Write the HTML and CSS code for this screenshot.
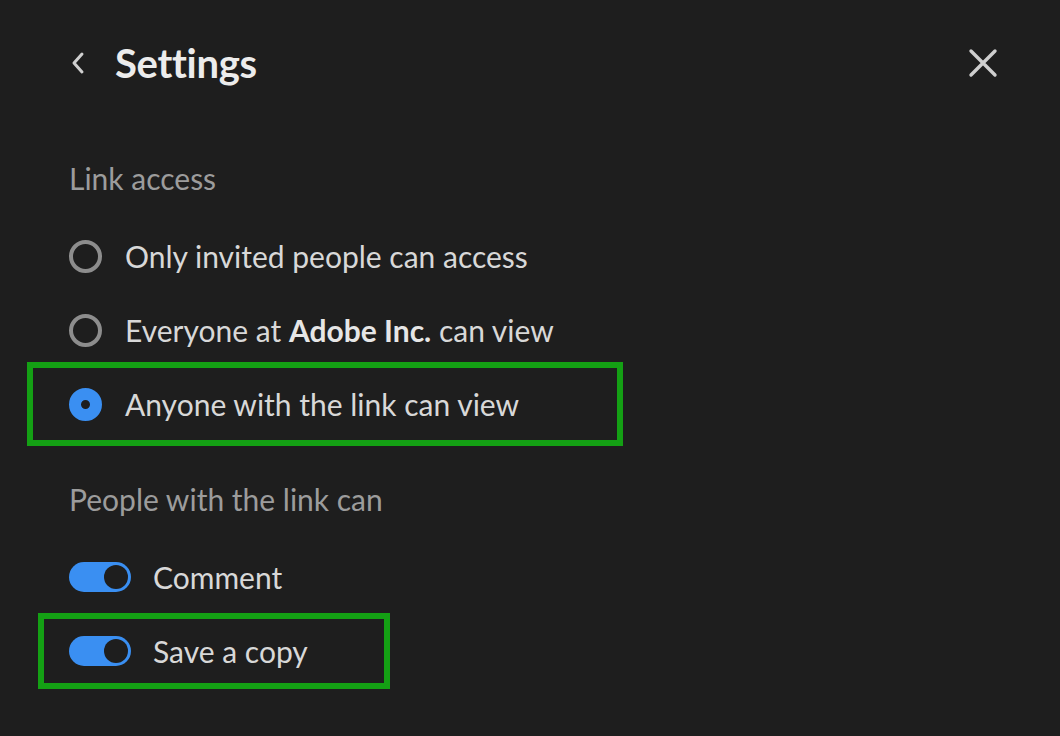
FILE: index.html
```html
<!DOCTYPE html>
<html>
<head>
<meta charset="utf-8">
<link rel="stylesheet" href="styles.css">
</head>
<body>
<div class="panel">
  <header class="header">
    <div class="title-wrap">
      <svg class="back" width="18" height="26" viewBox="0 0 18 26"><path d="M13 4 L5 13 L13 22" fill="none" stroke="#cfcfcf" stroke-width="3" stroke-linecap="round" stroke-linejoin="round"/></svg>
      <h1 class="title">Settings</h1>
    </div>
    <svg class="close" width="30" height="30" viewBox="0 0 30 30"><path d="M3 3 L27 27 M27 3 L3 27" fill="none" stroke="#cfcfcf" stroke-width="3.4" stroke-linecap="round"/></svg>
  </header>

  <section class="section">
    <div class="label">Link access</div>
    <div class="row">
      <span class="radio"></span>
      <span class="text">Only invited people can access</span>
    </div>
    <div class="row">
      <span class="radio"></span>
      <span class="text">Everyone at <b>Adobe Inc.</b> can view</span>
    </div>
    <div class="row row-hl hl-1">
      <span class="radio radio-on"></span>
      <span class="text">Anyone with the link can view</span>
    </div>
  </section>

  <section class="section section-2">
    <div class="label">People with the link can</div>
    <div class="row">
      <span class="toggle"><span class="knob"></span></span>
      <span class="text">Comment</span>
    </div>
    <div class="row row-hl hl-2">
      <span class="toggle"><span class="knob"></span></span>
      <span class="text">Save a copy</span>
    </div>
  </section>
</div>
</body>
</html>
```

FILE: styles.css
```css
html, body {
  margin: 0;
  padding: 0;
  background: #1e1e1e;
}
body {
  width: 1060px;
  height: 736px;
  overflow: hidden;
  font-family: Lato, "Open Sans", sans-serif;
  color: #d6d6d6;
}
.panel {
  padding: 0 62px 0 69px;
}
.header {
  display: flex;
  align-items: center;
  justify-content: space-between;
  height: 128px;
  padding-bottom: 2px;
  box-sizing: border-box;
}
.title-wrap {
  display: flex;
  align-items: center;
  gap: 28px;
}
.back {
  display: block;
}
.title {
  margin: 0;
  font-size: 40px;
  font-weight: 700;
  color: #ececec;
  letter-spacing: -0.3px;
}
.close {
  display: block;
}
.section {
  display: flex;
  flex-direction: column;
}
.label {
  font-size: 30px;
  color: #9c9c9c;
  line-height: 34px;
  padding-top: 33px;
  box-sizing: border-box;
  height: 91px;
}
.section-2 .label {
  height: 99px;
  padding-top: 41px;
}
.row {
  display: flex;
  align-items: center;
  height: 74px;
  box-sizing: border-box;
}
.text {
  font-size: 30px;
  color: #d8d8d8;
}
.text b {
  font-weight: 700;
  color: #e6e6e6;
}
.radio {
  width: 33px;
  height: 33px;
  box-sizing: border-box;
  border: 4px solid #8d8d8d;
  border-radius: 50%;
  margin-right: 23px;
  flex: none;
}
.radio-on {
  border: 12px solid #3a8ff2;
  background: #1e1e1e;
}
.toggle {
  width: 62px;
  height: 30px;
  border-radius: 15px;
  background: #3a8ff2;
  margin-right: 22px;
  display: flex;
  align-items: center;
  justify-content: flex-end;
  padding-right: 3px;
  box-sizing: border-box;
  flex: none;
}
.knob {
  width: 24px;
  height: 24px;
  border-radius: 50%;
  background: #1e1e1e;
}
.row-hl {
  border: 6px solid #14a014;
}
.hl-1 {
  width: 596px;
  height: 84px;
  margin: -5px 0 -5px -42px;
  padding-left: 36px;
}
.hl-2 {
  width: 352px;
  height: 76px;
  margin: -1px 0 -1px -31px;
  padding-left: 25px;
}
```
